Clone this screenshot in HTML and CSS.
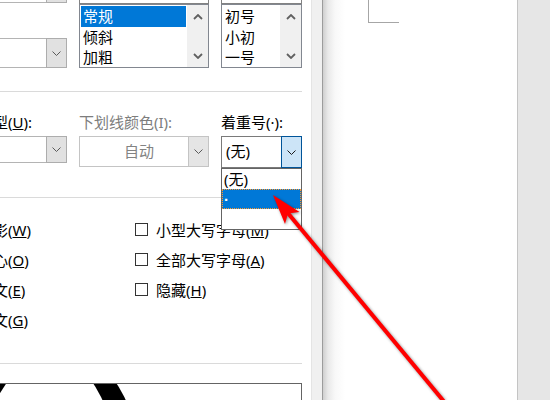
FILE: index.html
```html
<!DOCTYPE html>
<html lang="zh-CN">
<head>
<meta charset="utf-8">
<title>字体</title>
<link rel="stylesheet" href="styles.css">
</head>
<body>
<div class="screen">
  <div class="dialog">
    <div class="inner">
      <div class="row fonts">
        <div class="col">
          <div class="stub stub-combo"><span class="val"></span><span class="btn"></span></div>
          <div class="combo combo-a"><span class="val"></span><span class="btn"><svg class="chev" width="9" height="5" viewBox="0 0 9 5"><polyline points="0.5,0.5 4.5,4.5 8.5,0.5"/></svg></span></div>
        </div>
        <div class="col">
          <div class="stub"></div>
          <div class="list">
            <div class="items">
              <div class="item sel">常规</div>
              <div class="item">倾斜</div>
              <div class="item">加粗</div>
            </div>
            <div class="sb">
              <svg class="sarr" width="10" height="6" viewBox="0 0 10 6"><polyline points="1,5 5,1 9,5"/></svg>
              <svg class="sarr" width="10" height="6" viewBox="0 0 10 6"><polyline points="1,1 5,5 9,1"/></svg>
            </div>
          </div>
        </div>
        <div class="col">
          <div class="stub"></div>
          <div class="list">
            <div class="items">
              <div class="item">初号</div>
              <div class="item">小初</div>
              <div class="item">一号</div>
            </div>
            <div class="sb">
              <svg class="sarr" width="10" height="6" viewBox="0 0 10 6"><polyline points="1,5 5,1 9,5"/></svg>
              <svg class="sarr" width="10" height="6" viewBox="0 0 10 6"><polyline points="1,1 5,5 9,1"/></svg>
            </div>
          </div>
        </div>
      </div>

      <div class="sep sep1"></div>

      <div class="row opts">
        <div class="col">
          <div class="lbl">下划线线型(<u>U</u>):</div>
          <div class="combo combo-b"><span class="val"></span><span class="btn"><svg class="chev" width="9" height="5" viewBox="0 0 9 5"><polyline points="0.5,0.5 4.5,4.5 8.5,0.5"/></svg></span></div>
        </div>
        <div class="col">
          <div class="lbl dis">下划线颜色(I):</div>
          <div class="combo combo-c"><span class="val center">自动</span><span class="btn"><svg class="chev" width="9" height="5" viewBox="0 0 9 5"><polyline points="0.5,0.5 4.5,4.5 8.5,0.5"/></svg></span></div>
        </div>
        <div class="col">
          <div class="lbl">着重号(·):</div>
          <div class="combo combo-d"><span class="val">(无)</span><span class="btn"><svg class="chev dark" width="9" height="5" viewBox="0 0 9 5"><polyline points="0.5,0.5 4.5,4.5 8.5,0.5"/></svg></span></div>
          <div class="dd">
            <div class="opt">(无)</div>
            <div class="opt sel"><span class="dot">·</span></div>
            <div class="opt"></div>
          </div>
        </div>
      </div>

      <div class="sep sep2"></div>

      <div class="effects">
        <label class="cb"><span class="box"></span><span>阴影(<u>W</u>)</span></label>
        <label class="cb"><span class="box"></span><span>小型大写字母(<u>M</u>)</span></label>
        <label class="cb"><span class="box"></span><span>空心(<u>O</u>)</span></label>
        <label class="cb"><span class="box"></span><span>全部大写字母(<u>A</u>)</span></label>
        <label class="cb"><span class="box"></span><span>阳文(<u>E</u>)</span></label>
        <label class="cb"><span class="box"></span><span>隐藏(<u>H</u>)</span></label>
        <label class="cb"><span class="box"></span><span>阴文(<u>G</u>)</span></label>
        <span></span>
      </div>

      <div class="sep sep3"></div>

      <div class="preview">
        <span class="pv pv1">X</span><span class="pv pv2">)</span>
      </div>
    </div>
  </div>
  <div class="strip"></div>
  <div class="doc"><div class="crop"></div></div>
  <div class="extra"></div>
</div>

<svg class="arrow" width="550" height="400" viewBox="0 0 550 400">
  <line x1="287" y1="212" x2="446" y2="404" stroke="#ff0000" stroke-width="4"/>
  <polygon points="273,195 299.5,212 288,213.5 285,224" fill="#ff0000"/>
</svg>
</body>
</html>
```

FILE: styles.css
```css
* { box-sizing: border-box; margin: 0; padding: 0; }

html, body {
  width: 550px;
  height: 400px;
  overflow: hidden;
  background: #fff;
}

body {
  position: relative;
  font-family: "Noto Sans", "Noto Sans CJK SC", sans-serif;
  font-size: 15px;
  color: #000;
}

u { text-decoration: underline; text-underline-offset: 1px; }

.screen {
  display: flex;
  height: 400px;
}

/* ---------- dialog ---------- */
.dialog {
  width: 311px;
  flex: none;
  overflow: hidden;
  background: #fff;
}

.inner {
  margin-left: -67px;
  width: 369px;
}

.row {
  display: grid;
  grid-template-columns: 134px 130px 81px;
  column-gap: 12px;
}

.col {
  display: flex;
  flex-direction: column;
  position: relative;
}

.fonts {
  margin-top: -21px;
  height: 89px;
}

.stub {
  height: 25px;
  border: 1px solid #828282;
  background: #fff;
}

.stub-combo {
  height: 24px;
  display: flex;
  border-color: #b4b4b4;
}

.stub-combo .btn {
  width: 21px;
  margin: -1px -1px -1px 0;
  background: #e1e1e1;
  border: 1px solid #adadad;
}

.stub-combo .val { flex: 1; }

/* combos */
.combo {
  display: flex;
  border: 1px solid #b4b4b4;
  background: #fff;
}

.combo .val {
  flex: 1;
  line-height: 28px;
  padding-left: 4px;
  white-space: nowrap;
}

.combo .val.center {
  text-align: center;
  padding-left: 10px;
  color: #838383;
}

.combo .btn {
  width: 21px;
  margin: -1px -1px -1px 0;
  background: #e1e1e1;
  border: 1px solid #adadad;
  display: flex;
  align-items: center;
  justify-content: center;
}

.chev polyline {
  fill: none;
  stroke: #5a5a5a;
  stroke-width: 1;
}

.chev.dark polyline { stroke: #1a1a1a; }

.combo-a { margin-top: 35px; height: 30px; }
.combo-b { height: 27px; }
.combo-c { height: 31px; border-color: #c4c4c4; }
.combo-c .btn { background: #e5e5e5; border-color: #c4c4c4; }
.combo-d { height: 32px; border-color: #7a7a7a; }
.combo-d .btn { background: #cce4f7; border-color: #005499; }

/* list boxes */
.list {
  height: 64px;
  border: 1px solid #828790;
  background: #fff;
  display: flex;
}

.items {
  flex: 1;
  padding: 1px 1px 0 1px;
  overflow: hidden;
}

.item {
  height: 20.5px;
  line-height: 20px;
  padding-left: 2px;
  white-space: nowrap;
}

.item.sel {
  background: #0078d7;
  color: #fff;
}

.sb {
  width: 21px;
  flex: none;
  background: #f0f0f0;
  display: flex;
  flex-direction: column;
  justify-content: space-between;
  align-items: center;
  padding: 9px 0 8px;
}

.sarr polyline {
  fill: none;
  stroke: #606060;
  stroke-width: 1.8;
}

/* separators */
.sep {
  height: 1px;
  background: #dadada;
}

.sep1 { margin-top: 23px; }
.sep2 { margin-top: 29px; }
.sep3 { margin-top: 28px; }

/* options row */
.opts { padding-top: 20px; }

.lbl {
  height: 20px;
  line-height: 20px;
  margin-bottom: 4px;
  white-space: nowrap;
}

.lbl.dis { color: #7d7d7d; }

/* dropdown */
.dd {
  position: absolute;
  left: 0;
  top: 56px;
  width: 81px;
  height: 62px;
  border: 1px solid #646464;
  background: #fff;
  z-index: 2;
}

.dd .opt {
  height: 20px;
  line-height: 20px;
  padding-left: 2px;
  white-space: nowrap;
}

.dd .opt.sel {
  background: #0078d7;
  color: #fff;
  outline: 1px dotted #ff9a2e;
  outline-offset: -1px;
}

.dot {
  font-family: "Liberation Sans", sans-serif;
  font-weight: bold;
}

/* effects */
.effects {
  margin-top: 17px;
  padding-left: 24px;
  display: grid;
  grid-template-columns: 178px 1fr;
  grid-auto-rows: 30px;
  height: 120px;
}

.cb {
  display: flex;
  align-items: center;
  gap: 8px;
  white-space: nowrap;
  line-height: 20px;
}

.box {
  width: 13px;
  height: 13px;
  flex: none;
  border: 1px solid #333;
  background: #fff;
  margin-top: -1px;
}

/* preview */
.preview {
  margin-top: 19px;
  height: 60px;
  border: 1px solid #646464;
  overflow: hidden;
  display: flex;
  align-items: flex-start;
}

.pv {
  font-family: "Liberation Sans", sans-serif;
  font-weight: bold;
  color: #000;
}

.pv1 {
  font-size: 110px;
  line-height: 110px;
  margin-top: -18px;
  margin-left: 2px;
}

.pv2 {
  font-size: 170px;
  line-height: 170px;
  margin-top: -26px;
  margin-left: 80px;
}

/* ---------- right side ---------- */
.strip {
  width: 12px;
  flex: none;
  background: #f0f0f0;
  border-left: 1px solid #e4e4e4;
  border-right: 1px solid #9c9c9c;
}

.doc {
  width: 195px;
  flex: none;
  background: linear-gradient(to right, #cfcfcf 0, #e9e9e9 5px, #f8f8f8 12px, #fff 22px);
  border-right: 1px solid #c4c4c4;
}

.crop {
  margin-left: 45px;
  width: 31px;
  height: 23px;
  border-left: 1px solid #a6a6a6;
  border-bottom: 1px solid #a6a6a6;
}

.extra {
  flex: 1;
  background: #e6e6e6;
}

/* annotation arrow */
.arrow {
  position: absolute;
  left: 0;
  top: 0;
  z-index: 10;
  pointer-events: none;
  filter: drop-shadow(1px 1px 1.5px rgba(0, 0, 0, 0.45));
}
```
